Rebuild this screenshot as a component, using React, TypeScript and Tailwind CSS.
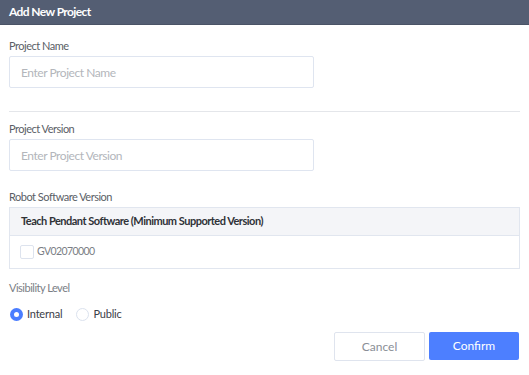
import { useState } from "react";

const font = { fontFamily: "Lato, 'Noto Sans', sans-serif" };

const Field = ({ label, placeholder }: { label: string; placeholder: string }) => {
  return (
    <div className="flex flex-col">
      <label className="text-[11px] leading-[14px] tracking-[-0.5px] text-[#5a5e66]">{label}</label>
      <input
        placeholder={placeholder}
        className="mt-[3px] h-[32px] w-[305px] rounded-[2px] border border-[#dfe5f0] px-[11px] text-[12px] tracking-[-0.45px] text-[#333] outline-none placeholder:text-[#b3b6bb]"
      />
    </div>
  );
};

const Radio = ({ label, checked, onClick }: { label: string; checked: boolean; onClick: () => void }) => {
  return (
    <button className="flex items-center gap-[4px]" onClick={onClick}>
      {checked ? (
        <span className="flex h-[13px] w-[13px] items-center justify-center rounded-full bg-[#4a7dff]">
          <span className="h-[5px] w-[5px] rounded-full bg-white" />
        </span>
      ) : (
        <span className="h-[13px] w-[13px] rounded-full border border-[#dbe2ee] bg-white" />
      )}
      <span className="text-[11px] leading-[14px] tracking-[-0.2px] text-[#3c4048]">{label}</span>
    </button>
  );
};

const App = () => {
  const [visibility, setVisibility] = useState("internal");
  const [checked, setChecked] = useState(false);

  return (
    <div className="flex min-h-screen w-full flex-col bg-white" style={font}>
      <div className="flex h-[25px] items-center border-b border-[#4a5366] bg-[#545e73] px-[9px]">
        <span className="text-[12px] font-bold tracking-[-0.6px] text-white">Add New Project</span>
      </div>
      <div className="flex flex-col px-[9px]">
        <div className="mt-[14px]">
          <Field label="Project Name" placeholder="Enter Project Name" />
        </div>
        <div className="mt-[23px] h-px w-full bg-[#e4e6ea]" />
        <div className="mt-[10px]">
          <Field label="Project Version" placeholder="Enter Project Version" />
        </div>
        <div className="mt-[19px] text-[11px] leading-[14px] tracking-[-0.5px] text-[#5a5e66]">
          Robot Software Version
        </div>
        <div className="mt-[3px] flex flex-col border border-[#e1e6ef]">
          <div className="flex h-[28px] items-center border-b border-[#e1e6ef] bg-[#f4f5f8] px-[11px]">
            <span className="text-[11px] font-bold tracking-[-0.5px] text-[#2f3237]">
              Teach Pendant Software (Minimum Supported Version)
            </span>
          </div>
          <div className="flex h-[32px] items-center gap-[3px] px-[10px]">
            <button
              className="h-[14px] w-[14px] rounded-[2px] border border-[#dde3ee] bg-white"
              onClick={() => setChecked(!checked)}
            />
            <span className="text-[10.5px] tracking-[-0.6px] text-[#7a7e85]">GV02070000</span>
          </div>
        </div>
        <div className="mt-[12px] text-[11px] leading-[14px] tracking-[-0.5px] text-[#7a7e85]">
          Visibility Level
        </div>
        <div className="mt-[12px] flex items-center gap-[14px] pl-px">
          <Radio label="Internal" checked={visibility === "internal"} onClick={() => setVisibility("internal")} />
          <Radio label="Public" checked={visibility === "public"} onClick={() => setVisibility("public")} />
        </div>
        <div className="mt-[11px] flex justify-end gap-[4px] pr-px">
          <button className="h-[29px] w-[91px] rounded-[2px] border border-[#dfe4ee] bg-white text-[12px] text-[#8a8e96]">
            Cancel
          </button>
          <button className="h-[28px] w-[90px] rounded-[2px] bg-[#4d7fff] text-[12px] text-white">Confirm</button>
        </div>
      </div>
    </div>
  );
};

export default App;
